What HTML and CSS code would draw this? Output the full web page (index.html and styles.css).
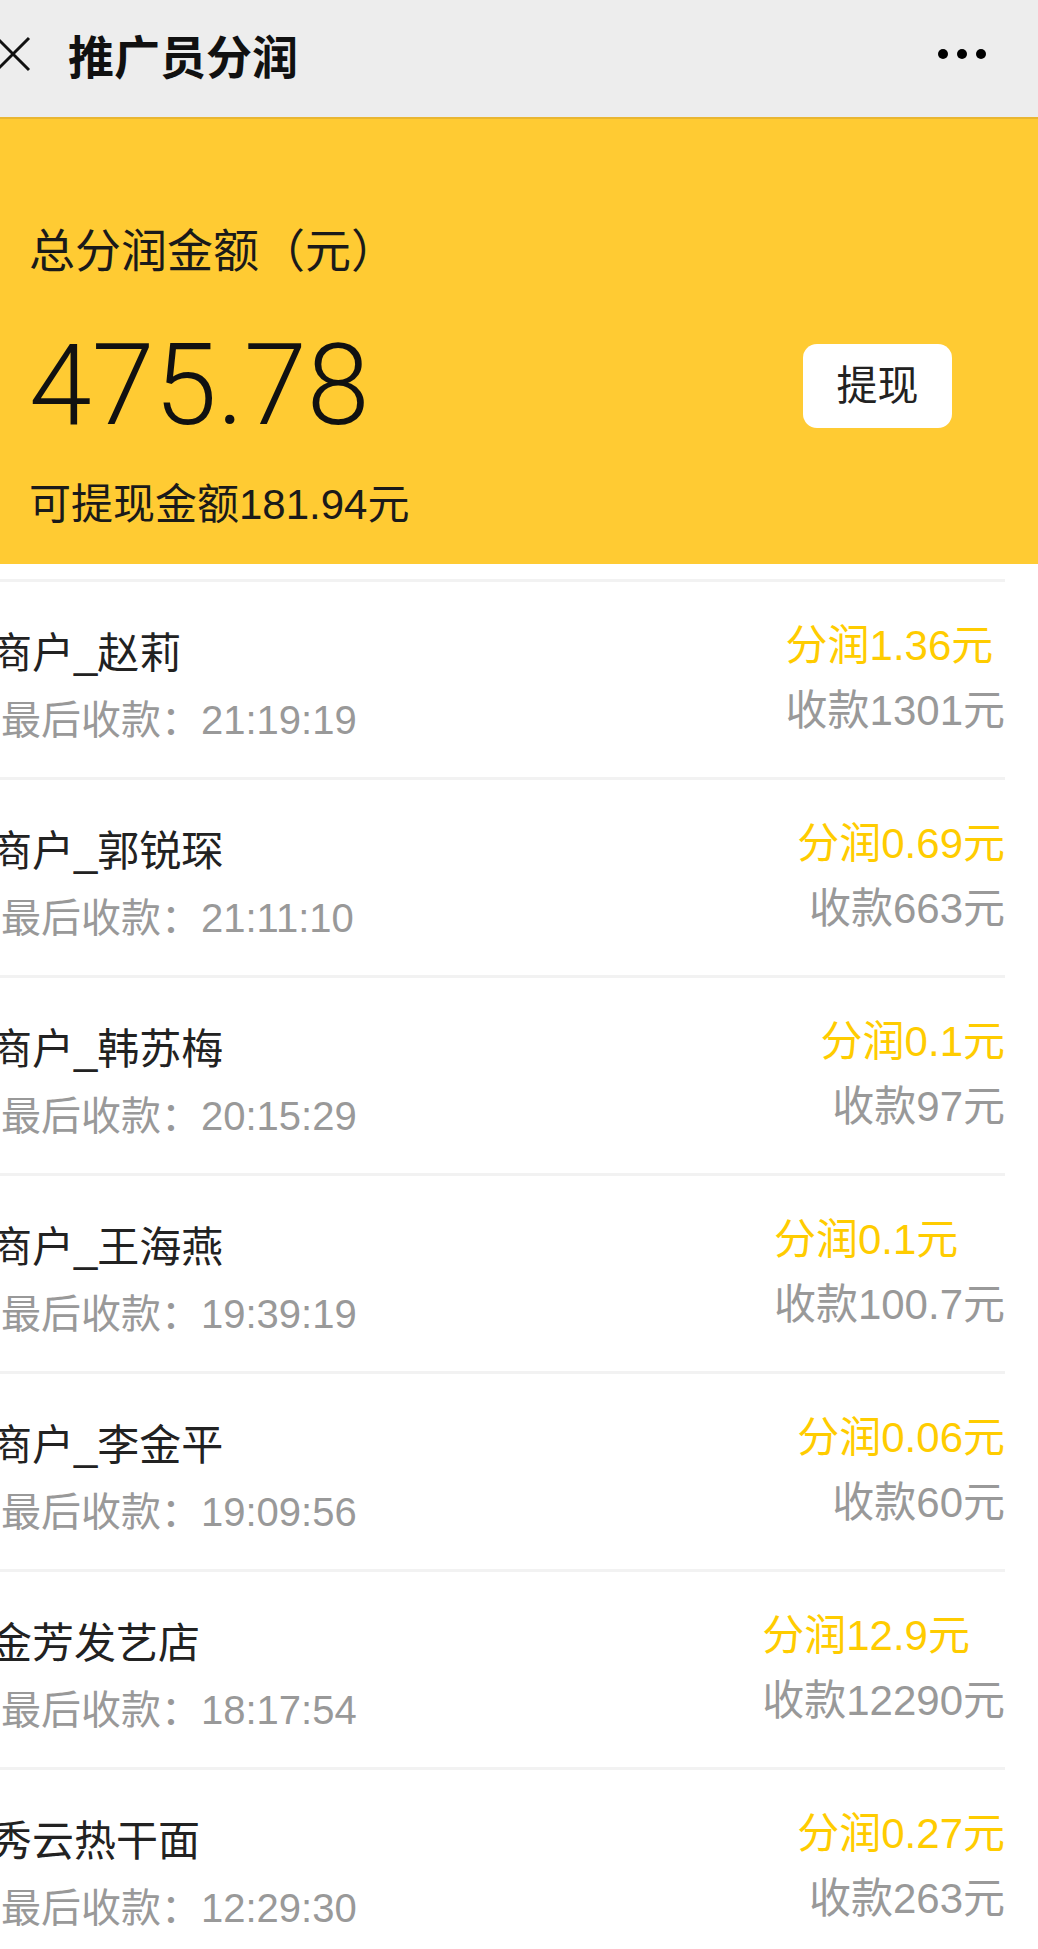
FILE: index.html
```html
<!DOCTYPE html>
<html lang="zh-CN">
<head>
    <meta charset="UTF-8">
    <meta name="viewport" content="width=device-width, initial-scale=1.0">
    <title>推广员分润</title>
    <link rel="stylesheet" href="styles.css">
</head>
<body>

<div class="nav-bar">
    <svg class="nav-close" width="38" height="38" viewBox="0 0 38 38">
        <path d="M3 3 L35 35 M35 3 L3 35" stroke="#111" stroke-width="3" fill="none"/>
    </svg>
    <div class="nav-title">推广员分润</div>
    <svg class="nav-more" width="50" height="10" viewBox="0 0 50 10">
        <circle cx="5" cy="5" r="5" fill="#000"/>
        <circle cx="24" cy="5" r="5" fill="#000"/>
        <circle cx="43" cy="5" r="5" fill="#000"/>
    </svg>
</div>

<div class="summary">
    <div class="summary-label">总分润金额（元）</div>
    <div class="summary-row">
        <div class="summary-amount">475.78</div>
        <button class="withdraw-btn">提现</button>
    </div>
    <div class="summary-available">可提现金额181.94元</div>
</div>

<ul class="shop-list">
    <li class="shop-item">
        <div class="shop-info">
            <div class="shop-name">商户_赵莉</div>
            <div class="shop-time">最后收款：21:19:19</div>
        </div>
        <div class="shop-money">
            <div class="shop-profit">分润1.36元</div>
            <div class="shop-income">收款1301元</div>
        </div>
    </li>
    <li class="shop-item">
        <div class="shop-info">
            <div class="shop-name">商户_郭锐琛</div>
            <div class="shop-time">最后收款：21:11:10</div>
        </div>
        <div class="shop-money">
            <div class="shop-profit">分润0.69元</div>
            <div class="shop-income">收款663元</div>
        </div>
    </li>
    <li class="shop-item">
        <div class="shop-info">
            <div class="shop-name">商户_韩苏梅</div>
            <div class="shop-time">最后收款：20:15:29</div>
        </div>
        <div class="shop-money">
            <div class="shop-profit">分润0.1元</div>
            <div class="shop-income">收款97元</div>
        </div>
    </li>
    <li class="shop-item">
        <div class="shop-info">
            <div class="shop-name">商户_王海燕</div>
            <div class="shop-time">最后收款：19:39:19</div>
        </div>
        <div class="shop-money">
            <div class="shop-profit">分润0.1元</div>
            <div class="shop-income">收款100.7元</div>
        </div>
    </li>
    <li class="shop-item">
        <div class="shop-info">
            <div class="shop-name">商户_李金平</div>
            <div class="shop-time">最后收款：19:09:56</div>
        </div>
        <div class="shop-money">
            <div class="shop-profit">分润0.06元</div>
            <div class="shop-income">收款60元</div>
        </div>
    </li>
    <li class="shop-item">
        <div class="shop-info">
            <div class="shop-name">金芳发艺店</div>
            <div class="shop-time">最后收款：18:17:54</div>
        </div>
        <div class="shop-money">
            <div class="shop-profit">分润12.9元</div>
            <div class="shop-income">收款12290元</div>
        </div>
    </li>
    <li class="shop-item">
        <div class="shop-info">
            <div class="shop-name">秀云热干面</div>
            <div class="shop-time">最后收款：12:29:30</div>
        </div>
        <div class="shop-money">
            <div class="shop-profit">分润0.27元</div>
            <div class="shop-income">收款263元</div>
        </div>
    </li>
</ul>

</body>
</html>
```

FILE: styles.css
```css
body {
    font-family: 'Liberation Sans', 'Noto Sans CJK SC', sans-serif;
    background-color: #ffffff;
    margin: 0;
    overflow-x: hidden;
    text-spacing-trim: space-all;
}
.nav-bar {
    height: 108px;
    padding-bottom: 9px;
    background-color: #ededed;
    border-bottom: 2px solid #e9b631;
    display: flex;
    align-items: center;
}
.nav-close {
    margin-left: -6px;
}
.nav-title {
    margin-left: 36px;
    font-size: 46px;
    font-weight: bold;
    color: #111;
}
.nav-more {
    margin-left: auto;
    margin-right: 50px;
}
.summary {
    background-color: #ffcb33;
    padding: 101px 86px 31px 29px;
}
.summary-label {
    font-size: 46px;
    line-height: 62px;
    color: #1a1a1a;
}
.summary-row {
    margin-top: 44px;
    display: flex;
    align-items: center;
    justify-content: space-between;
}
.summary-amount {
    font-family: Roboto, 'Liberation Sans', sans-serif;
    font-weight: 300;
    font-size: 113px;
    line-height: 120px;
    color: #111;
}
.withdraw-btn {
    width: 149px;
    height: 84px;
    background-color: #ffffff;
    border: none;
    border-radius: 14px;
    font-family: inherit;
    font-size: 41px;
    color: #222;
    padding: 0 0 8px;
}
.summary-available {
    margin-top: 31px;
    font-size: 42px;
    line-height: 56px;
    color: #1a1a1a;
}
.shop-list {
    list-style: none;
    margin: 15px 33px 0 0;
    padding: 0;
}
.shop-item {
    height: 195px;
    border-top: 3px solid #f2f2f2;
    display: flex;
    justify-content: space-between;
    align-items: flex-start;
}
.shop-info {
    padding-top: 39px;
}
.shop-name {
    margin-left: -10px;
    font-size: 42px;
    line-height: 66px;
    color: #222;
}
.shop-time {
    margin-left: 1px;
    font-size: 40px;
    line-height: 66px;
    color: #999;
}
.shop-money {
    padding-top: 31px;
    display: flex;
    flex-direction: column;
}
.shop-profit {
    font-size: 42px;
    line-height: 65px;
    color: #ffcc00;
    text-align: left;
}
.shop-income {
    font-size: 42px;
    line-height: 65px;
    color: #999;
    text-align: right;
}
```
